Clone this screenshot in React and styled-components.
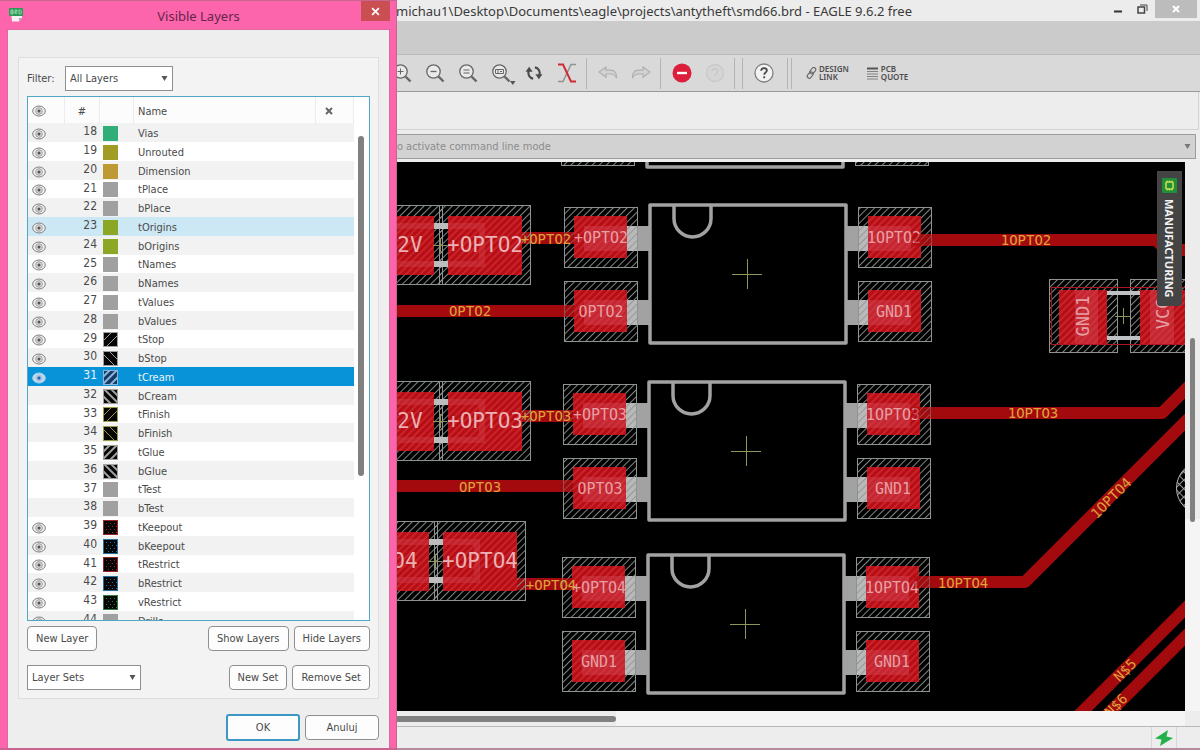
import React, { useState } from 'react';
import styled, { createGlobalStyle, css } from 'styled-components';

const GlobalStyle = createGlobalStyle`
    * {
        box-sizing: border-box;
    }
    body {
        margin: 0;
        background: #ededed;
        font-family: "DejaVu Sans Condensed", "DejaVu Sans", sans-serif;
        font-size: 11px;
        color: #4a4a4a;
    }
    button, select, input {
        font: inherit;
        color: inherit;
    }
`;

/* ---------- main window ---------- */

const Desktop = styled.div`
    position: relative;
    display: flex;
    height: 100vh;
    overflow: hidden;
`;

const Window = styled.main`
    flex: 1;
    min-width: 0;
    display: flex;
    flex-direction: column;
    background: #ededed;
    border-bottom: 2px solid #b48a9e;
`;

const TitleBar = styled.header`
    display: flex;
    align-items: flex-start;
    height: 21px;
    padding-left: 396px;
    background: #ececec;
`;

const WindowTitle = styled.h1`
    flex: 1;
    margin: 0;
    font-family: "Noto Sans", sans-serif;
    font-weight: 400;
    font-size: 13px;
    line-height: 22px;
    white-space: nowrap;
    color: #3a3a3a;
`;

const WindowButton = styled.button`
    display: flex;
    align-items: center;
    justify-content: center;
    width: ${p => (p.$close ? 42 : 25)}px;
    height: 18px;
    margin-right: ${p => (p.$close ? 3 : 0)}px;
    padding: 0;
    border: 0;
    background: ${p => (p.$close ? '#bcbcbc' : 'transparent')};
`;

const MenuBand = styled.div`
    height: 34px;
    background: #cbcbcb;
    border-bottom: 1px solid #b9b9b9;
`;

const Toolbar = styled.nav`
    display: flex;
    align-items: stretch;
    height: 37px;
    padding-left: 385px;
    background: #d9d9d9;
    border-bottom: 1px solid #999;
`;

const Tool = styled.button`
    display: flex;
    align-items: center;
    justify-content: center;
    width: 33px;
    padding: 0;
    border: 0;
    background: none;
`;

const Separator = styled.span`
    width: 1px;
    margin: 3px 4px 2px 3px;
    background: #b4b4b4;
`;

const Handle = styled.span`
    width: 5px;
    margin: 3px 14px 2px 7px;
    border: solid #b4b4b4;
    border-width: 0 1px;
`;

const ServiceLink = styled.a`
    display: flex;
    align-items: center;
    gap: 2px;
    margin-right: 17px;
    font-family: "Noto Sans", sans-serif;
    font-size: 8px;
    font-weight: 600;
    line-height: 8px;
    color: #4d4d4d;
    text-decoration: none;
`;

const ParameterBar = styled.div`
    height: 38px;
    margin-right: 1px;
    border: solid #d3d3d3;
    border-width: 0 1px 1px 0;
`;

const CommandRow = styled.div`
    display: flex;
    align-items: center;
    height: 25px;
    margin: 4px 4px 3px 0;
    padding-right: 4px;
    background: #d2d2d2;
    border: 1px solid #9c9c9c;
`;

const CommandInput = styled.input`
    flex: 1;
    min-width: 0;
    height: 23px;
    padding: 0 0 0 392px;
    border: 0;
    outline: 0;
    background: none;
    &::placeholder {
        color: #8c8c8c;
        opacity: 1;
    }
`;

const PlainButton = styled.button`
    display: flex;
    padding: 0;
    border: 0;
    background: none;
`;

const Workspace = styled.div`
    flex: 1;
    min-height: 0;
    display: grid;
    grid-template-columns: minmax(0, 1fr) 15px;
    grid-template-rows: minmax(0, 1fr) 15px;
`;

const BoardArea = styled.section`
    position: relative;
    overflow: hidden;
    background: #000;
`;

const BoardSvg = styled.svg`
    display: block;
    width: 100%;
    height: 100%;
    font-family: "DejaVu Sans Mono", monospace;
`;

const VerticalTrack = styled.div`
    display: flex;
    flex-direction: column;
    background: linear-gradient(#ececec 65%, #f5f5f5 65%);
    padding: 176px 5px 0;
`;

const HorizontalTrack = styled.div`
    background: linear-gradient(90deg, #ececec 52%, #f5f5f5 52%);
    padding: 5px 0;
`;

const Thumb = styled.div`
    border-radius: 3px;
    background: #808080;
    ${p => (p.$vertical ? css`height: 184px;` : css`width: 52%; height: 6px;`)}
`;

const ManufacturingTab = styled.button`
    position: absolute;
    top: 9px;
    right: 3px;
    display: flex;
    align-items: center;
    gap: 6px;
    width: 25px;
    padding: 7px 0 8px;
    writing-mode: vertical-rl;
    border: 0;
    border-radius: 0 0 3px 3px;
    background: #444;
    color: #f2f2f2;
    font-family: "Noto Sans", sans-serif;
    font-size: 11px;
    font-weight: 700;
`;

const StatusBar = styled.footer`
    display: flex;
    justify-content: flex-end;
    height: 22px;
    padding-right: 23px;
    border-top: 1px solid #b8b8b8;
    background: #ededed;
`;

const StatusCell = styled.div`
    display: flex;
    align-items: center;
    justify-content: center;
    width: 26px;
    border: solid #d8d8d8;
    border-width: 0 1px;
`;

/* ---------- layer dialog ---------- */

const Dialog = styled.section`
    position: absolute;
    top: 0;
    bottom: 0;
    left: 0;
    display: flex;
    flex-direction: column;
    width: 397px;
    padding: 0 6px 0 7px;
    background: #fc64ac;
    border: solid #c9638f;
    border-width: 1px 1px 2px 0;
`;

const DialogTitleBar = styled.header`
    display: flex;
    align-items: flex-start;
    justify-content: space-between;
    height: 28px;
    svg {
        margin: 6px 0 0 2px;
    }
`;

const DialogTitle = styled.h2`
    margin: 0;
    padding-left: 12px;
    font-family: "Noto Sans", sans-serif;
    font-weight: 400;
    font-size: 13px;
    line-height: 30px;
    color: #64264a;
`;

const DialogClose = styled.button`
    display: flex;
    align-items: center;
    justify-content: center;
    width: 29px;
    height: 20px;
    padding: 0;
    border: 0;
    background: #c94f53;
    svg {
        margin: 0;
    }
`;

const DialogBody = styled.div`
    flex: 1;
    min-height: 0;
    display: flex;
    flex-direction: column;
    padding: 27px 10px 7px 10px;
    background: #eee;
    border: 1px solid #dc6a9e;
    border-bottom: 0;
`;

const Group = styled.div`
    flex: 1;
    min-height: 0;
    display: flex;
    flex-direction: column;
    padding: 8px 8px;
    background: #f3f3f3;
    border: 1px solid #dedede;
`;

const Row = styled.div`
    display: flex;
    align-items: center;
    gap: 5px;
    margin-top: ${p => p.$top || 0}px;
`;

const Spacer = styled.span`
    flex: 1;
`;

const FilterLabel = styled.label`
    width: 33px;
`;

const SelectBox = styled.span`
    position: relative;
    display: inline-flex;
    width: ${p => p.$width}px;
    svg {
        position: absolute;
        top: 9px;
        right: 5px;
        pointer-events: none;
    }
`;

const Select = styled.select`
    appearance: none;
    width: 100%;
    height: 25px;
    padding: 0 4px;
    border: 1px solid #8f8f8f;
    border-radius: 0;
    background: #fff;
`;

const Button = styled.button`
    height: 25px;
    padding: 0 8px;
    border: 1px solid #8f8f8f;
    border-radius: 4px;
    background: #fdfdfd;
    white-space: nowrap;
    ${p => p.$wide && css`width: 74px;`}
    ${p => p.$primary && css`
        height: 27px;
        border: 2px solid #3c97c4;
        border-radius: 3px;
    `}
`;

const ListFrame = styled.div`
    flex: 1;
    min-height: 0;
    display: flex;
    align-items: flex-start;
    margin-top: 5px;
    overflow: hidden;
    border: 1px solid #4fa9c6;
    background: #fff;
`;

const ListThumb = styled.div`
    width: 6px;
    height: 340px;
    margin: 39px 5px 0 auto;
    border-radius: 3px;
    background: #808080;
`;

const LayerTable = styled.table`
    width: 326px;
    table-layout: fixed;
    border-collapse: separate;
    border-spacing: 0;
    th {
        height: 26px;
        padding: 2px 4px 0;
        border-right: 1px solid #ececec;
        background: #fcfcfc;
        font-weight: 400;
        text-align: left;
    }
    td {
        padding: 2px 4px 0;
        line-height: 14px;
    }
    th svg, td svg {
        display: block;
    }
`;

const CenteredHead = styled.th`
    && {
        text-align: center;
    }
`;

const UsedHead = styled.th`
    && {
        padding-left: 9px;
    }
`;

const LayerRow = styled.tr`
    height: 19px;
    background: #fff;
    &:nth-child(odd) {
        background: #f2f2f2;
    }
    &:nth-child(4n) {
        height: 18px;
    }
    ${p => p.$state === 'hover' && css`&&& { background: #cde8f5; }`}
    ${p => p.$state === 'selected' && css`&&& { background: #0893d8; color: #e8f4fb; }`}
`;

const NumberCell = styled.td`
    && {
        padding: 0 3px 3px 0;
        text-align: right;
        font-size: 12px;
    }
`;

const SwatchCell = styled.td`
    && {
        padding: 1px 3px 0;
    }
`;

const DialogFooter = styled.footer`
    display: flex;
    align-items: center;
    justify-content: flex-end;
    gap: 5px;
    margin-top: 15px;
`;

/* ---------- data ---------- */

const LAYERS = [
    { id: 18, name: 'Vias', color: '#2fae7a', on: true },
    { id: 19, name: 'Unrouted', color: '#a09c24', on: true },
    { id: 20, name: 'Dimension', color: '#bd9a33', on: true },
    { id: 21, name: 'tPlace', color: '#a0a0a0', on: true },
    { id: 22, name: 'bPlace', color: '#a0a0a0', on: true },
    { id: 23, name: 'tOrigins', color: '#8ca626', on: true },
    { id: 24, name: 'bOrigins', color: '#8ca626', on: true },
    { id: 25, name: 'tNames', color: '#a0a0a0', on: true },
    { id: 26, name: 'bNames', color: '#a0a0a0', on: true },
    { id: 27, name: 'tValues', color: '#a0a0a0', on: true },
    { id: 28, name: 'bValues', color: '#a0a0a0', on: true },
    { id: 29, name: 'tStop', color: '#a0a0a0', fill: 'up', on: true },
    { id: 30, name: 'bStop', color: '#a0a0a0', fill: 'down', on: true },
    { id: 31, name: 'tCream', color: '#8db4d4', back: '#123a66', fill: 'upWide', on: true },
    { id: 32, name: 'bCream', color: '#a0a0a0', fill: 'downWide' },
    { id: 33, name: 'tFinish', color: '#9a9a48', fill: 'up' },
    { id: 34, name: 'bFinish', color: '#9a9a48', fill: 'down' },
    { id: 35, name: 'tGlue', color: '#a0a0a0', fill: 'upWide' },
    { id: 36, name: 'bGlue', color: '#a0a0a0', fill: 'downWide' },
    { id: 37, name: 'tTest', color: '#a0a0a0' },
    { id: 38, name: 'bTest', color: '#a0a0a0' },
    { id: 39, name: 'tKeepout', color: '#9c2424', fill: 'dots', on: true },
    { id: 40, name: 'bKeepout', color: '#2470a0', fill: 'dots', on: true },
    { id: 41, name: 'tRestrict', color: '#9c2424', fill: 'dots', on: true },
    { id: 42, name: 'bRestrict', color: '#2470a0', fill: 'dots', on: true },
    { id: 43, name: 'vRestrict', color: '#2c7c3c', fill: 'dots', on: true },
    { id: 44, name: 'Drills', color: '#a0a0a0', on: true },
];

const CHIPS = [
    { x: 647, y: 29, left: ['', ''], right: ['', ''] },
    { x: 650, y: 205, left: ['+OPTO2', 'OPTO2'], right: ['1OPTO2', 'GND1'] },
    { x: 649, y: 382, left: ['+OPTO3', 'OPTO3'], right: ['1OPTO3', 'GND1'] },
    { x: 648, y: 555, left: ['+OPTO4', 'GND1'], right: ['1OPTO4', 'GND1'] },
];

/* ---------- icons ---------- */

const Caret = ({ color = '#555' }) => (
    <svg width="7" height="7" viewBox="0 0 7 7"><path d="M.5 1h6L3.500 6z" fill={color} /></svg>
);

const Cross = ({ color = '#fff', size = 8, width = 2 }) => (
    <svg width={size} height={size} viewBox="0 0 8 8">
        <path d="M1 1l6 6M7 1L1 7" stroke={color} strokeWidth={width} />
    </svg>
);

const Eye = ({ light }) => (
    <svg width="14" height="12" viewBox="0 0 14 12">
        <ellipse cx="7" cy="6" rx="6.300" ry="5" fill={light ? '#c4dcf2' : '#f1f1f1'} stroke={light ? '#a5cdec' : '#7d7d7d'} />
        <circle cx="7" cy="6" r="3.400" fill={light ? '#9dbfe0' : '#d2d2d2'} stroke={light ? '#b6d4ee' : '#9a9a9a'} strokeWidth=".8" />
        <circle cx="7" cy="6" r="1.500" fill={light ? '#2c5e9c' : '#555'} />
    </svg>
);

const FILLS = {
    up: { d: 'M1 8l7-7M4 14L14 4', width: 1 },
    down: { d: 'M7 1l7 7M1 4l10 10', width: 1 },
    upWide: { d: 'M0 7l7-7M0 14L14 0M7 15l8-8', width: 2 },
    downWide: { d: 'M8 0l7 7M1 0l14 14M0 7l8 8', width: 2 },
    dots: { d: 'M3 3.500h10M5 6.500h10M3 9.500h10M5 12.500h10', width: 1, dash: '1 3' },
};

const Swatch = ({ color, back = '#060606', fill }) => {
    const f = FILLS[fill];
    return (
        <svg width="15" height="15" viewBox="0 0 15 15">
            <rect width="15" height="15" fill={f ? back : color} />
            {f && <path d={f.d} stroke={color} strokeWidth={f.width} strokeDasharray={f.dash} fill="none" />}
            {f && <rect x=".5" y=".5" width="14" height="14" fill="none" stroke={color} />}
        </svg>
    );
};

const Magnifier = ({ children, menu }) => (
    <svg width="24" height="24" viewBox="0 0 24 24" fill="none" stroke="#666" overflow="visible">
        <circle cx="10.500" cy="10.500" r="6.700" fill="#e9e9e9" strokeWidth="1.300" />
        <path d="M15.500 15.500l5 5" strokeWidth="2.400" />
        {children}
        {menu && <path d="M21 20h5.500l-2.750 4z" fill="#555" stroke="none" />}
    </svg>
);

const Refresh = () => (
    <svg width="18" height="16" viewBox="0 0 20 18" fill="none" stroke="#4c4c4c" strokeWidth="2.400">
        <path d="M9 15.300A6.200 6.200 0 0 1 4.200 6.500M11 2.700A6.200 6.200 0 0 1 15.800 11.500" />
        <path d="M.5 7.500L4.500 2l4 5.500zM11.500 10.500h8l-4 5.500z" fill="#4c4c4c" stroke="none" />
    </svg>
);

const Ratsnest = () => (
    <svg width="20" height="20" viewBox="0 0 20 20" fill="none" strokeWidth="2">
        <path d="M19 1.500h-5L6 18.500H1" stroke="#929292" strokeWidth="1.500" />
        <path d="M1 1.500h5l8 17h5" stroke="#d02c34" />
    </svg>
);

const Arrow = ({ flip }) => (
    <svg width="20" height="14" viewBox="0 0 20 14">
        <path
            d="M1 6l7-5v3.200h4.500c4 0 6.200 2.800 6.200 8C17.200 9.300 15.500 8 12.500 8H8v3.200z"
            transform={flip ? 'translate(20 0) scale(-1 1)' : undefined}
            fill="#d2d2d2" stroke="#b0b0b0" strokeWidth="1.200"
        />
    </svg>
);

const Stop = () => (
    <svg width="20" height="20" viewBox="0 0 20 20">
        <circle cx="10" cy="10" r="9.500" fill="#dc1f3c" />
        <path d="M5 10h10" stroke="#fff" strokeWidth="2.400" />
    </svg>
);

const Help = ({ faded }) => (
    <svg width="20" height="20" viewBox="0 0 20 20" fill="none">
        <circle cx="10" cy="10" r={faded ? 8.5 : 9} fill={faded ? '#d5d5d5' : '#f2f2f2'} stroke={faded ? '#c9c9c9' : '#808080'} strokeWidth="1.300" />
        {faded
            ? <path d="M7 8c0-3 6-3 6 0s-3 2-3 5" stroke="#c9c9c9" strokeWidth="1.500" />
            : <path d="M7.200 7.800c0-3.800 5.700-3.500 5.700-.3 0 2-2.700 2-2.700 4.300M10.200 13.200v2" stroke="#4a4a4a" strokeWidth="1.800" />}
    </svg>
);

const BoardFile = () => (
    <svg width="15" height="15" viewBox="0 0 15 15">
        <path d="M2 5h11v6l-3 3.500H3z" fill="#f6f0f2" />
        <path d="M10 14.500V11h3z" fill="#b9a5af" />
        <rect x="0" y="1" width="14" height="8" rx="1" fill="#2b9a58" />
        <path d="M2 3v4h2V3zM2 5h2M6 7V3h2v2H6l2 2M10 3v4h1.500l.8-1V4l-.8-1z" fill="none" stroke="#a8e0bb" strokeWidth=".8" />
    </svg>
);

/* ---------- board drawing ---------- */

const Label = ({ x, y, size = 14, color = '#dda23a', rotate = 0, children }) => (
    <text
        x={x} y={y} fontSize={size} fill={color}
        textAnchor="middle" dominantBaseline="central"
        transform={rotate ? `rotate(${rotate} ${x} ${y})` : undefined}
    >
        {children}
    </text>
);

const Origin = ({ x, y, r = 15 }) => (
    <path d={`M${x - r} ${y + 0.5}h${2 * r}M${x + 0.5} ${y - r}v${2 * r}`} stroke="#8c9658" />
);

const StopMask = ({ x, y, w, h }) => (
    <rect x={x + 0.5} y={y + 0.5} width={w} height={h} fill="url(#hatch)" stroke="#8d9390" />
);

const Copper = ({ x, y, w, h }) => (
    <g>
        <rect x={x} y={y} width={w} height={h} fill="#b60e14" />
        <rect x={x} y={y} width={w} height={h} fill="url(#cream)" />
    </g>
);

const ChipPad = ({ x, y, side, label }) => (
    <g>
        <rect x={side === 'left' ? x + 63 : x - 11} y={y + 19} width="22" height="25" fill="#a2a2a2" />
        {side === 'left'
            ? <rect x={x + 63} y={y + 19} width="11" height="25" fill="#b9b9b9" />
            : <rect x={x} y={y + 19} width="11" height="25" fill="#b9b9b9" />}
        <StopMask x={x} y={y} w={73} h={60} />
        <Copper x={x + 10} y={y + 9} w={53} h={42} />
        <rect x={side === 'left' ? x + 20 : x + 10} y={y + 19} width="43" height="25" fill="#d2404e" opacity=".5" />
        <Label x={side === 'left' ? x + 37 : x + 36} y={y + 31} size={15} color="#e6a0a4">{label}</Label>
    </g>
);

const Chip = ({ x, y, left, right }) => (
    <g>
        <ChipPad x={x - 86} y={y + 2} side="left" label={left[0]} />
        <ChipPad x={x - 86} y={y + 76} side="left" label={left[1]} />
        <ChipPad x={x + 208} y={y + 2} side="right" label={right[0]} />
        <ChipPad x={x + 208} y={y + 76} side="right" label={right[1]} />
        <rect x={x} y={y} width="196" height="138" fill="#000" stroke="#a2a2a2" strokeWidth="3.500" strokeLinejoin="round" />
        <path d={`M${x + 24} ${y}v13.500a18.500 18.500 0 0 0 37 0v-13.500`} fill="none" stroke="#a2a2a2" strokeWidth="3.500" />
        <Origin x={x + 97} y={y + 69} />
    </g>
);

const Resistor = ({ x, y, left, right }) => (
    <g>
        <StopMask x={x - 88} y={y} w={91} h={79} />
        <StopMask x={x} y={y} w={91} h={79} />
        <Copper x={x - 80} y={y + 11} w={75} h={59} />
        <Copper x={x + 9} y={y + 11} w={74} h={59} />
        <rect x={x - 80} y={y + 21} width="123" height="38" fill="none" stroke="#d2404e" strokeWidth="6" opacity=".4" />
        <path d={`M${x - 5} ${y + 21}h14M${x - 5} ${y + 59}h14`} stroke="#bdbdbd" strokeWidth="6" />
        <Origin x={x + 1} y={y + 40} r={7} />
        <Label x={x - 29} y={y + 40} size={21} color="#ecb0b2">{left}</Label>
        <Label x={x + 46} y={y + 40} size={21} color="#ecb0b2">{right}</Label>
    </g>
);

const Board = () => (
    <BoardSvg role="img" aria-label="smd66.brd">
        <defs>
            <pattern id="hatch" width="5" height="5" patternUnits="userSpaceOnUse" patternTransform="rotate(45)">
                <path d="M.5 0v5" stroke="#8f9693" strokeWidth=".9" />
            </pattern>
            <pattern id="cream" width="5" height="5" patternUnits="userSpaceOnUse" patternTransform="rotate(45)">
                <path d="M1 0v5" stroke="#cf2a33" strokeWidth="1.500" />
            </pattern>
            <pattern id="mesh" width="6" height="6" patternUnits="userSpaceOnUse" patternTransform="rotate(45)">
                <path d="M.5 0v6M0 .5h6" stroke="#aaa" strokeWidth=".9" />
            </pattern>
        </defs>
        <g transform="translate(0 -162)">
            <g fill="none" stroke="#a30a0e" strokeWidth="12" strokeLinejoin="round">
                <path d="M515 238h70M380 311h200M515 416h70M380 486h200M505 584h75" />
                <path d="M900 240h256l10 10h40M900 413h262l60-60M900 582h125l200-200" />
                <path d="M1063 731l160-160M1091 731l160-160" />
            </g>
            <Resistor x={439} y={205} left="2V" right="+OPTO2" />
            <Resistor x={439} y={381} left="2V" right="+OPTO3" />
            <Resistor x={434} y={521} left="O4" right="+OPTO4" />
            {CHIPS.map(chip => <Chip key={chip.y} {...chip} />)}

            <path d="M560 238h14M560 311h14M560 416h13M560 486h13M558 584h14M914 240h20M914 413h20M914 582h20" stroke="#a30a0e" strokeWidth="12" opacity=".5" />
            <Label x={546} y={239}>+OPTO2</Label>
            <Label x={546} y={416}>+OPTO3</Label>
            <Label x={551} y={585}>+OPTO4</Label>
            <Label x={470} y={311}>OPTO2</Label>
            <Label x={480} y={487}>OPTO3</Label>
            <Label x={1026} y={240}>1OPTO2</Label>
            <Label x={1033} y={413}>1OPTO3</Label>
            <Label x={963} y={583}>1OPTO4</Label>
            <Label x={1111} y={498} rotate={-45}>1OPTO4</Label>
            <Label x={1125} y={670} rotate={-45}>N$5</Label>
            <Label x={1116} y={705} rotate={-45}>N$6</Label>

            <StopMask x={1049} y={279} w={68} h={73} />
            <StopMask x={1130} y={279} w={68} h={73} />
            <rect x="1051.500" y="287.500" width="146" height="57" fill="none" stroke="#b0141c" />
            <Copper x={1059} y={290} w={48} h={54} />
            <Copper x={1140} y={290} w={48} h={54} />
            <rect x="1075" y="290" width="23" height="54" fill="#d2404e" opacity=".5" />
            <rect x="1150" y="290" width="24" height="54" fill="#d2404e" opacity=".5" />
            <path d="M1107 293h33M1107 338h33" stroke="#bfc2c4" strokeWidth="4" />
            <Origin x={1123} y={316} r={8} />
            <Label x={1083} y={316} size={17} color="#e6a0a4" rotate={-90}>GND1</Label>
            <Label x={1163} y={314} size={17} color="#e6a0a4" rotate={-90}>VCC</Label>
            <circle cx="1203" cy="488" r="26.500" fill="url(#mesh)" stroke="#b5b5b5" />
        </g>
    </BoardSvg>
);

/* ---------- dialog ---------- */

function LayersDialog() {
    const [layers, setLayers] = useState(LAYERS);
    const [selected, setSelected] = useState(31);

    const toggle = (id) => {
        setLayers(layers.map(l => (l.id === id ? { ...l, on: !l.on } : l)));
    };

    const rowState = (id) => {
        if (id === selected) return 'selected';
        return id === 23 ? 'hover' : undefined;
    };

    return (
        <Dialog role="dialog" aria-labelledby="layers-title">
            <DialogTitleBar>
                <BoardFile />
                <DialogTitle id="layers-title">Visible Layers</DialogTitle>
                <DialogClose aria-label="Close"><Cross size={9} width={1.5} /></DialogClose>
            </DialogTitleBar>
            <DialogBody>
                <Group>
                    <Row>
                        <FilterLabel htmlFor="filter">Filter:</FilterLabel>
                        <SelectBox $width={108}>
                            <Select id="filter"><option>All Layers</option></Select>
                            <Caret />
                        </SelectBox>
                    </Row>
                    <ListFrame>
                        <LayerTable>
                            <colgroup>
                                <col width="37" />
                                <col width="35" />
                                <col width="34" />
                                <col width="182" />
                                <col width="38" />
                            </colgroup>
                            <thead>
                                <tr>
                                    <th aria-label="Visible"><Eye /></th>
                                    <CenteredHead>#</CenteredHead>
                                    <th aria-label="Color" />
                                    <th>Name</th>
                                    <UsedHead aria-label="Used"><Cross color="#666" /></UsedHead>
                                </tr>
                            </thead>
                            <tbody>
                                {layers.map(l => (
                                    <LayerRow key={l.id} $state={rowState(l.id)} onClick={() => setSelected(l.id)}>
                                        <td>
                                            {l.on && (
                                                <PlainButton aria-label={`Toggle ${l.name}`} onClick={() => toggle(l.id)}>
                                                    <Eye light={l.id === selected} />
                                                </PlainButton>
                                            )}
                                        </td>
                                        <NumberCell>{l.id}</NumberCell>
                                        <SwatchCell><Swatch {...l} /></SwatchCell>
                                        <td colSpan="2">{l.name}</td>
                                    </LayerRow>
                                ))}
                            </tbody>
                        </LayerTable>
                        <ListThumb />
                    </ListFrame>
                    <Row $top={5}>
                        <Button>New Layer</Button>
                        <Spacer />
                        <Button>Show Layers</Button>
                        <Button>Hide Layers</Button>
                    </Row>
                    <Row $top={14}>
                        <SelectBox $width={114}>
                            <Select aria-label="Layer sets"><option>Layer Sets</option></Select>
                            <Caret />
                        </SelectBox>
                        <Spacer />
                        <Button>New Set</Button>
                        <Button>Remove Set</Button>
                    </Row>
                </Group>
                <DialogFooter>
                    <Button $wide $primary>OK</Button>
                    <Button $wide>Anuluj</Button>
                </DialogFooter>
            </DialogBody>
        </Dialog>
    );
}

export default function App() {
    return (
        <Desktop>
            <GlobalStyle />
            <Window>
                <TitleBar>
                    <WindowTitle>michau1\Desktop\Documents\eagle\projects\antytheft\smd66.brd - EAGLE 9.6.2 free</WindowTitle>
                    <WindowButton aria-label="Minimize">
                        <svg width="10" height="10" viewBox="0 0 10 10"><path d="M1 7.500h8" stroke="#333" strokeWidth="2" /></svg>
                    </WindowButton>
                    <WindowButton aria-label="Restore">
                        <svg width="11" height="10" viewBox="0 0 11 10" fill="none" stroke="#444">
                            <path d="M1 3h6.500v6H1z" strokeWidth="1.500" />
                            <path d="M3 1h7v6" />
                        </svg>
                    </WindowButton>
                    <WindowButton $close aria-label="Close window"><Cross /></WindowButton>
                </TitleBar>
                <MenuBand />
                <Toolbar>
                    <Tool aria-label="Zoom in"><Magnifier><path d="M7.500 10.500h6M10.500 7.500v6" /></Magnifier></Tool>
                    <Tool aria-label="Zoom out"><Magnifier><path d="M7.500 10.500h6" strokeWidth="1.300" /></Magnifier></Tool>
                    <Tool aria-label="Zoom to fit"><Magnifier><path d="M7.500 9h6M7.500 12h6" strokeWidth="1.200" /></Magnifier></Tool>
                    <Tool aria-label="Zoom select"><Magnifier menu><path d="M6.500 8.500h8v4h-8zM9 8.500v4M11 10.500h2" /></Magnifier></Tool>
                    <Tool aria-label="Redraw"><Refresh /></Tool>
                    <Tool aria-label="Ratsnest"><Ratsnest /></Tool>
                    <Separator />
                    <Tool aria-label="Undo"><Arrow /></Tool>
                    <Tool aria-label="Redo"><Arrow flip /></Tool>
                    <Separator />
                    <Tool aria-label="Stop"><Stop /></Tool>
                    <Tool aria-label="Go" disabled><Help faded /></Tool>
                    <Separator />
                    <Separator />
                    <Tool aria-label="Help"><Help /></Tool>
                    <Handle />
                    <ServiceLink href="#design-link">
                        <svg width="11" height="12" viewBox="0 0 11 12" fill="none" stroke="#666" strokeWidth="1.100">
                            <rect x="4.800" y=".2" width="4" height="7" rx="2" transform="rotate(40 6.800 3.700)" />
                            <rect x="2.200" y="4.600" width="4" height="7" rx="2" transform="rotate(40 4.200 8.100)" />
                        </svg>
                        <span>DESIGN<br />LINK</span>
                    </ServiceLink>
                    <ServiceLink href="#pcb-quote">
                        <svg width="13" height="13" viewBox="0 0 13 13" stroke="#777">
                            <path d="M1 1.500h11" stroke="#555" strokeWidth="2" />
                            <path d="M1 4.500h11M1 7h11M1 9.500h11M1 12h11" strokeWidth=".9" />
                        </svg>
                        <span>PCB<br />QUOTE</span>
                    </ServiceLink>
                </Toolbar>
                <ParameterBar />
                <CommandRow>
                    <CommandInput aria-label="Command line" placeholder="to activate command line mode" />
                    <PlainButton aria-label="Command history"><Caret color="#777" /></PlainButton>
                </CommandRow>
                <Workspace>
                    <BoardArea>
                        <Board />
                        <ManufacturingTab>
                            <svg width="15" height="15" viewBox="0 0 15 15">
                                <rect width="15" height="15" rx="1" fill="#1f8f3a" />
                                <path d="M5 2.500v10M7.500 2.500v10M10 2.500v10" stroke="#d8e04a" />
                                <rect x="4" y="4" width="7" height="7" rx="1" fill="#1f8f3a" stroke="#d8e04a" strokeWidth="1.500" />
                            </svg>
                            <span>MANUFACTURING</span>
                        </ManufacturingTab>
                    </BoardArea>
                    <VerticalTrack><Thumb $vertical /></VerticalTrack>
                    <HorizontalTrack><Thumb /></HorizontalTrack>
                </Workspace>
                <StatusBar>
                    <StatusCell>
                        <svg width="18" height="18" viewBox="0 0 18 18"><path d="M13 1L0 9.500l6.500 1L5 17l13-8-6.500-1.500z" fill="#24b04c" /></svg>
                    </StatusCell>
                </StatusBar>
            </Window>
            <LayersDialog />
        </Desktop>
    );
}
